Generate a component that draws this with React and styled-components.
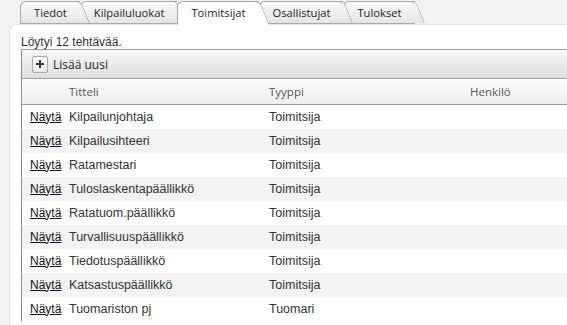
import styled, { createGlobalStyle } from "styled-components";

const GlobalStyle = createGlobalStyle`
  html, body {
    margin: 0;
    padding: 0;
    background: #f2f2f2;
    overflow: hidden;
  }
  body {
    font-family: "Liberation Sans", Arial, sans-serif;
    font-size: 12px;
    color: #333;
  }
`;

const tabs = ["Tiedot", "Kilpailuluokat", "Toimitsijat", "Osallistujat", "Tulokset"];

const duties = [
  ["Kilpailunjohtaja", "Toimitsija"],
  ["Kilpailusihteeri", "Toimitsija"],
  ["Ratamestari", "Toimitsija"],
  ["Tuloslaskentapäällikkö", "Toimitsija"],
  ["Ratatuom.päällikkö", "Toimitsija"],
  ["Turvallisuuspäällikkö", "Toimitsija"],
  ["Tiedotuspäällikkö", "Toimitsija"],
  ["Katsastuspäällikkö", "Toimitsija"],
  ["Tuomariston pj", "Tuomari"],
];

export default function App() {
  const active = 2;
  return (
    <>
      <GlobalStyle />
      <TabBar>
        {tabs.map((t, i) => (
          <Tab key={t} $active={i === active} $z={i === active ? 20 : 10 - i}>
            {t}
          </Tab>
        ))}
      </TabBar>
      <Panel>
        <Summary>Löytyi 12 tehtävää.</Summary>
        <Grid>
          <Toolbar>
            <AddButton>
              <svg width="10" height="10" viewBox="0 0 10 10">
                <path d="M5 1v8M1 5h8" stroke="#3a3a3a" strokeWidth="2" />
              </svg>
            </AddButton>
            <span>Lisää uusi</span>
          </Toolbar>
          <Table>
            <colgroup>
              <col style={{ width: 42 }} />
              <col style={{ width: 200 }} />
              <col style={{ width: 201 }} />
              <col />
            </colgroup>
            <thead>
              <tr>
                <Th />
                <Th>Titteli</Th>
                <Th>Tyyppi</Th>
                <Th>Henkilö</Th>
              </tr>
            </thead>
            <tbody>
              {duties.map(([title, type], i) => (
                <Row key={title} $odd={i % 2 === 1}>
                  <LinkCell>
                    <a href="#">Näytä</a>
                  </LinkCell>
                  <Td>{title}</Td>
                  <Td>{type}</Td>
                  <Td />
                </Row>
              ))}
            </tbody>
          </Table>
        </Grid>
      </Panel>
    </>
  );
}

const TabBar = styled.div`
  display: flex;
  align-items: flex-end;
  height: 24px;
  padding-left: 20px;
  position: relative;
  z-index: 2;
`;

const Tab = styled.div`
  position: relative;
  z-index: ${(p) => p.$z};
  box-sizing: border-box;
  height: ${(p) => (p.$active ? 24 : 23)}px;
  margin-bottom: ${(p) => (p.$active ? -1 : 0)}px;
  padding: 3px 13px 0 13px;
  font-family: "Open Sans", "Noto Sans", sans-serif;
  font-size: 11.2px;
  color: #222;
  border: 1px solid #a9a9a9;
  border-right: none;
  border-bottom: ${(p) => (p.$active ? "none" : "1px solid #a9a9a9")};
  border-top-left-radius: 6px;
  background: ${(p) =>
    p.$active ? "#ffffff" : "linear-gradient(#fbfbfb, #e4e4e4)"};

  &::after {
    content: "";
    position: absolute;
    top: -1px;
    right: -1px;
    width: 14px;
    height: ${(p) => (p.$active ? 24 : 22)}px;
    box-sizing: border-box;
    background: inherit;
    border-top: 1px solid #a9a9a9;
    border-right: 1px solid #a9a9a9;
    border-top-right-radius: 6px;
    transform: skewX(22deg);
    transform-origin: top left;
    z-index: -1;
  }
`;

const Panel = styled.div`
  margin-left: 9px;
  background: #fff;
  border: 1px solid #e2e2e2;
  border-right: none;
  border-bottom: none;
  border-top-left-radius: 8px;
  padding: 10px 0 0 11px;
  height: calc(100vh - 35px);
  overflow: hidden;
`;

const Summary = styled.div`
  line-height: 14px;
  color: #333;
`;

const Grid = styled.div`
  border-left: 1px solid #8f8f8f;
  border-top: 1px solid #9a9a9a;
`;

const Toolbar = styled.div`
  display: flex;
  align-items: center;
  gap: 5px;
  height: 28px;
  padding-left: 10px;
  background: linear-gradient(#f7f7f7, #dedede);
  border-bottom: 1px solid #a3a3a3;
  font-family: "Open Sans", "Noto Sans", sans-serif;
  font-size: 12px;
  color: #222;
`;

const AddButton = styled.span`
  display: flex;
  align-items: center;
  justify-content: center;
  box-sizing: border-box;
  width: 16px;
  height: 17px;
  border: 1px solid #ababab;
  border-radius: 2px;
  background: linear-gradient(#ffffff, #e6e6e6);
`;

const Table = styled.table`
  width: 100%;
  border-collapse: collapse;
  table-layout: fixed;
`;

const Th = styled.th`
  height: 25px;
  padding: 0 0 0 5px;
  text-align: left;
  font-weight: normal;
  font-family: "Open Sans", "Noto Sans", sans-serif;
  font-size: 11.5px;
  color: #555;
  background: linear-gradient(#fdfdfd, #eeeeee);
  border-bottom: 1px solid #9a9a9a;
`;

const Row = styled.tr`
  height: 24px;
  background: ${(p) => (p.$odd ? "#f2f2f2" : "#ffffff")};
`;

const Td = styled.td`
  padding: 0 0 0 5px;
  font-size: 12.5px;
  color: #333;
  white-space: nowrap;
`;

const LinkCell = styled.td`
  padding: 0 0 0 8px;

  a {
    color: #111;
    text-decoration: underline;
  }
`;
